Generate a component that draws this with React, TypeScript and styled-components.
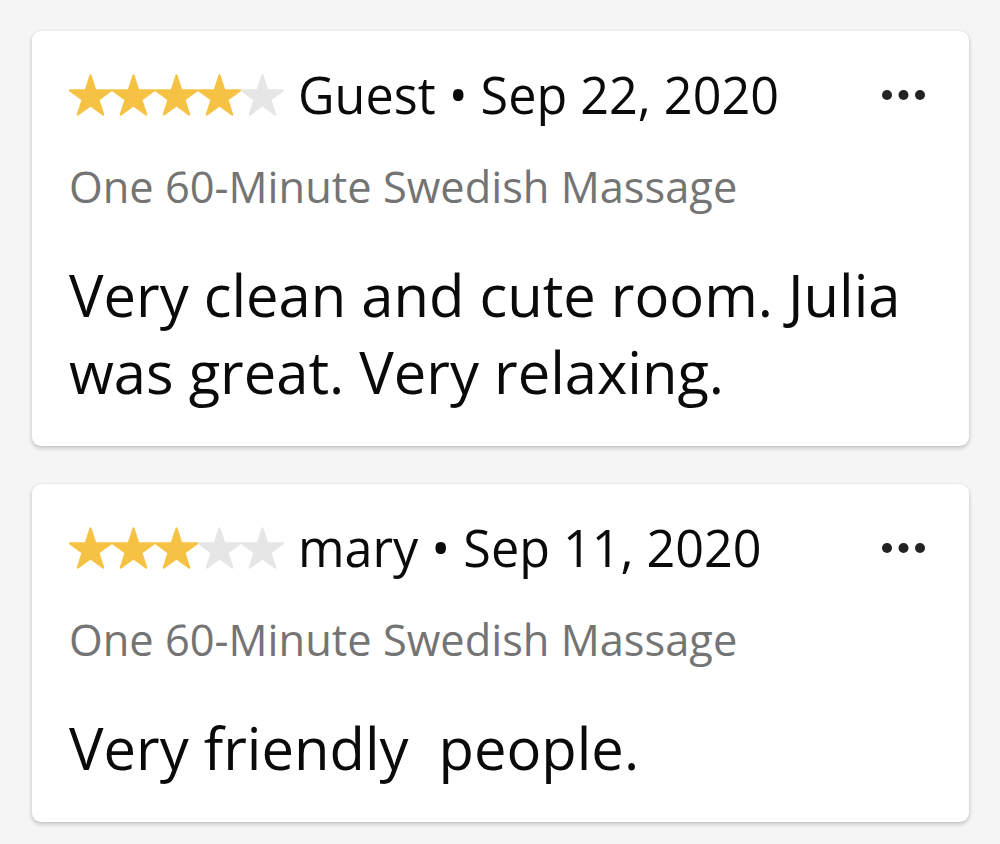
import React from "react";
import styled, { createGlobalStyle } from "styled-components";

const GlobalStyle = createGlobalStyle`
  html, body {
    margin: 0;
    padding: 0;
    background: #f5f5f5;
    font-family: "Open Sans", "Noto Sans", sans-serif;
    -webkit-font-smoothing: antialiased;
  }
  * { box-sizing: border-box; }
`;

const Viewport = styled.div`
  height: 844px;
  overflow: hidden;
  display: flex;
  flex-direction: column;
  justify-content: flex-end;
  padding: 0 31px 22px 32px;
`;

const List = styled.div`
  display: flex;
  flex-direction: column;
  gap: 38px;
`;

const Card = styled.article<{ $height?: number }>`
  flex-shrink: 0;
  background: #ffffff;
  border-radius: 9px;
  box-shadow: 0 2px 4px rgba(0, 0, 0, 0.22), 0 0 2px rgba(0, 0, 0, 0.05);
  padding: 33px 43px 36px 37px;
  ${(p) => (p.$height ? `height: ${p.$height}px;` : "")}
`;

const Header = styled.div`
  display: flex;
  align-items: center;
  height: 62px;
`;

const Stars = styled.div`
  display: flex;
  align-items: center;
  flex-shrink: 0;
`;

const StarSvg = styled.svg`
  width: 43px;
  height: 42px;
  display: block;
`;

const Meta = styled.div`
  flex: 1;
  margin-left: 14px;
  font-size: 50.3px;
  line-height: 62px;
  color: #0a0a0a;
  white-space: nowrap;
`;

const MoreButton = styled.button`
  border: none;
  background: none;
  padding: 0;
  display: flex;
  align-items: center;
  cursor: pointer;
`;

const Service = styled.div`
  margin-top: 34px;
  font-size: 43.4px;
  line-height: 54px;
  color: #747474;
  white-space: nowrap;
`;

const Body = styled.p`
  margin: 42px 0 0;
  font-size: 57.9px;
  line-height: 77px;
  color: #0a0a0a;
`;

const STAR_POINTS =
  "50,0 61.8,36.3 100,36.3 69.1,58.8 80.9,95.1 50,72.7 19.1,95.1 30.9,58.8 0,36.3 38.2,36.3";

const Star: React.FC<{ filled: boolean }> = ({ filled }) => (
  <StarSvg viewBox="-2 -2 104 99">
    <polygon
      points={STAR_POINTS}
      fill={filled ? "#f6c244" : "#e6e6e6"}
      stroke={filled ? "#f6c244" : "#e6e6e6"}
      strokeWidth={5}
      strokeLinejoin="round"
    />
  </StarSvg>
);

const Dots = () => (
  <svg width="44" height="10" viewBox="0 0 44 10">
    <circle cx="5" cy="5" r="5" fill="#222" />
    <circle cx="21.5" cy="5" r="5" fill="#222" />
    <circle cx="38" cy="5" r="5" fill="#222" />
  </svg>
);

type Review = {
  rating: number;
  author: string;
  date: string;
  service: string;
  text: string;
};

const reviews: Review[] = [
  {
    rating: 4,
    author: "Guest",
    date: "Sep 22, 2020",
    service: "One 60-Minute Swedish Massage",
    text: "Very clean and cute room. Julia was great. Very relaxing.",
  },
  {
    rating: 3,
    author: "mary",
    date: "Sep 11, 2020",
    service: "One 60-Minute Swedish Massage",
    text: "Very friendly\u00a0 people.",
  },
];

const ReviewCard: React.FC<{ review: Review }> = ({ review }) => (
  <Card>
    <Header>
      <Stars>
        {[0, 1, 2, 3, 4].map((i) => (
          <Star key={i} filled={i < review.rating} />
        ))}
      </Stars>
      <Meta>
        {review.author} • {review.date}
      </Meta>
      <MoreButton aria-label="More options">
        <Dots />
      </MoreButton>
    </Header>
    <Service>{review.service}</Service>
    <Body>{review.text}</Body>
  </Card>
);

export default function App() {
  return (
    <>
      <GlobalStyle />
      <Viewport>
        <List>
          {/* previous review, scrolled out of view above */}
          <Card $height={300} aria-hidden="true" />
          {reviews.map((r, i) => (
            <ReviewCard key={i} review={r} />
          ))}
        </List>
      </Viewport>
    </>
  );
}
